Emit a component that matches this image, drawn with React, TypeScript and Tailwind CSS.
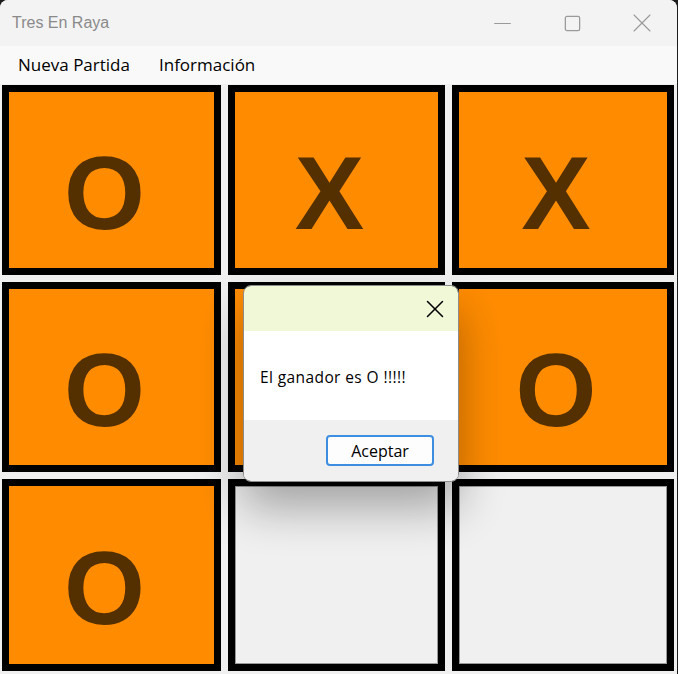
import { Minus, Square, X } from "lucide-react";

// "-" = played cell whose mark sits under the message box
type Mark = "O" | "X" | "-" | "";

const board: Mark[] = ["O", "X", "X", "O", "-", "O", "O", "", ""];

const Cell = ({ mark }: { mark: Mark }) => {
  const filled = mark !== "";
  return (
    <div className="border-[7px] border-black bg-black">
      <div
        className={
          filled
            ? "h-full w-full bg-[#ff8c00] flex items-center justify-center pt-[26px] pr-[14px]"
            : "h-full w-full bg-[#f0f0f0] border border-[#9a9a9a]"
        }
      >
        {filled && mark !== "-" && (
          <span className="font-['Liberation_Sans',Arial,sans-serif] font-bold text-[104px] leading-none text-[#543000]">
            {mark}
          </span>
        )}
      </div>
    </div>
  );
};

export default function App() {
  return (
    <div className="w-[678px] h-[674px] bg-[#1c1c1c] overflow-hidden">
      <div className="relative w-[677px] h-[674px] rounded-t-[8px] bg-[#f0f0f0] overflow-hidden font-['Liberation_Sans',Arial,sans-serif]">
        {/* Title bar */}
        <div className="h-[46px] bg-[#f3f3f3] flex items-center">
          <span className="pl-[12px] text-[16px] text-[#8a8a8a]">Tres En Raya</span>
          <div className="ml-auto flex items-center text-[#9a9a9a]">
            <div className="w-[70px] flex justify-center">
              <Minus size={27} strokeWidth={1} absoluteStrokeWidth />
            </div>
            <div className="w-[70px] flex justify-center">
              <Square size={19} strokeWidth={1.3} absoluteStrokeWidth />
            </div>
            <div className="w-[70px] flex justify-center">
              <X size={32} strokeWidth={1.1} absoluteStrokeWidth />
            </div>
          </div>
        </div>

        {/* Menu */}
        <div className="h-[38px] bg-[#f9f9f9] flex items-center gap-[29px] pl-[18px] text-[17px] text-black font-['Open_Sans',sans-serif]">
          <span>Nueva Partida</span>
          <span>Información</span>
        </div>

        {/* Board */}
        <div className="pt-[1px] pl-[2px] grid grid-cols-[219px_217px_222px] grid-rows-[190px_190px_192px] gap-[7px]">
          {board.map((m, i) => (
            <Cell key={i} mark={m} />
          ))}
        </div>

        {/* Message box */}
        <div className="absolute left-[243px] top-[285px] w-[216px] h-[197px] rounded-[8px] border border-[#8c8c8c] overflow-hidden flex flex-col shadow-[0_26px_46px_rgba(0,0,0,0.32)] font-['Open_Sans',sans-serif]">
          <div className="h-[45px] bg-[#f1f8d8] flex items-center justify-end pr-[8px]">
            <X size={30} strokeWidth={1.5} absoluteStrokeWidth className="text-black" />
          </div>
          <div className="h-[89px] bg-white flex items-center pl-[16px] pt-[4px] text-[15.5px] tracking-[0.4px] text-black">
            El ganador es O !!!!!
          </div>
          <div className="flex-1 bg-[#f0f0f0] flex items-start justify-end pt-[15px] pr-[24px]">
            <button className="w-[108px] h-[31px] rounded-[4px] border-2 border-[#3d8ee0] bg-[#fdfdfd] text-[16px] text-black">
              Aceptar
            </button>
          </div>
        </div>
      </div>
    </div>
  );
}
